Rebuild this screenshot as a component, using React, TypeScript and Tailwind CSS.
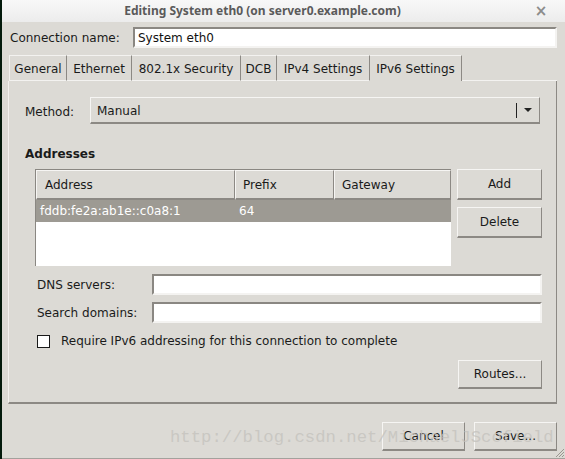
import { useState } from 'react';

const raised =
  'bg-[#dcdad5] border border-t-[#f6f5f3] border-l-[#f6f5f3] border-r-[#8c8984] border-b-2 border-b-[#8c8984]';
const sunken =
  'bg-white border-2 border-t-[#8a8782] border-l-[#8a8782] border-r-[#f4f3f1] border-b-[#f4f3f1] outline-none px-[3px] text-[12px]';

function Button({ label, className = '' }: { label: string; className?: string }) {
  return (
    <button className={`${raised} flex items-center justify-center text-[12px] text-[#1a1a1a] ${className}`}>
      {label}
    </button>
  );
}

const tabs = ['General', 'Ethernet', '802.1x Security', 'DCB', 'IPv4 Settings', 'IPv6 Settings'];
const tabWidths = ['w-[58px]', 'w-[65px]', 'w-[109px]', 'w-[36px]', 'w-[93px]', 'w-[92px]'];

export default function App() {
  const [name, setName] = useState('System eth0');
  const [requireV6, setRequireV6] = useState(false);

  return (
    <div className="flex h-[459px] w-[565px] bg-black font-['DejaVu_Sans',sans-serif] text-[12px] text-[#1a1a1a] overflow-hidden">
      <div className="w-[2px] bg-[#041a0c]" />
      <div className="relative flex-1 flex flex-col bg-[#dcdad5] border-b border-b-[#a3a19c]">
        {/* title bar */}
        <div className="flex h-[22px] bg-gradient-to-b from-[#f8f8f8] to-[#ececec]">
          <div className="flex-1 flex items-center justify-center font-['Noto_Sans',sans-serif] font-bold text-[12px] text-[#5a5a5a] pl-[2px]">
            Editing System eth0 (on server0.example.com)
          </div>
          <div className="w-[44px] flex items-center justify-center text-[#8c8c8c] font-bold text-[15px] pr-[4px]">
            ×
          </div>
        </div>

        {/* connection name */}
        <div className="flex items-center mt-[5px] h-[21px] pl-[8px] pr-[8px]">
          <div className="w-[123px]">Connection name:</div>
          <input
            value={name}
            onChange={e => setName(e.target.value)}
            className={`${sunken} flex-1 h-[21px] text-[#111]`}
          />
        </div>

        {/* tabs */}
        <div className="flex mt-[7px] ml-[7px] h-[26px]">
          {tabs.map((t, i) => (
            <div
              key={t}
              className={`${tabWidths[i]} flex items-center justify-center pt-[1px] border-t border-t-[#f3f2f0] border-r border-r-[#8c8984] ${i === 0 ? 'border-l border-l-[#f3f2f0]' : ''} ${i === 5 ? 'border-b-0' : 'border-b border-b-[#f3f2f0]'}`}
            >
              {t}
            </div>
          ))}
          <div className="flex-1 border-b border-b-[#f3f2f0] mr-[8px]" />
        </div>

        {/* panel */}
        <div className="ml-[6px] mr-[8px] h-[323px] border-l border-l-[#f3f2f0] border-r border-r-[#8c8984] border-b-2 border-b-[#8c8984] pl-[16px] pr-[14px] flex flex-col">
          <div className="flex items-center mt-[16px] h-[27px]">
            <div className="w-[65px] pt-[2px]">Method:</div>
            <div className={`${raised} flex-1 h-[27px] mr-[2px] flex items-center`}>
              <span className="flex-1 pl-[6px] pt-[2px]">Manual</span>
              <span className="w-px h-[15px] bg-[#222]" />
              <svg width="22" height="8" viewBox="0 0 22 8">
                <path d="M7 2h8l-4 4z" fill="#222" />
              </svg>
            </div>
          </div>

          <div className="mt-[22px] font-bold leading-[15px] pt-[1px]">Addresses</div>

          <div className="flex mt-[7px]">
            <div className="ml-[10px] w-[416px] h-[97px] bg-white border-l border-t border-l-[#8a8782] border-t-[#8a8782] flex flex-col">
              <div className="flex h-[30px]">
                <div className={`${raised} w-[199px] flex items-center pl-[8px]`}>Address</div>
                <div className={`${raised} w-[99px] flex items-center pl-[7px]`}>Prefix</div>
                <div className={`${raised} flex-1 flex items-center pl-[7px]`}>Gateway</div>
              </div>
              <div className="flex h-[22px] items-center bg-[#9d9a93] text-white">
                <span className="w-[203px] pl-[4px]">fddb:fe2a:ab1e::c0a8:1</span>
                <span>64</span>
              </div>
            </div>
            <div className="ml-[6px] flex-1 flex flex-col gap-[7px]">
              <Button label="Add" className="h-[31px]" />
              <Button label="Delete" className="h-[31px]" />
            </div>
          </div>

          <div className="flex items-center mt-[8px] h-[21px]">
            <div className="ml-[12px] w-[115px]">DNS servers:</div>
            <input className={`${sunken} flex-1 h-[21px]`} />
          </div>
          <div className="flex items-center mt-[7px] h-[21px]">
            <div className="ml-[12px] w-[115px]">Search domains:</div>
            <input className={`${sunken} flex-1 h-[21px]`} />
          </div>

          <label className="flex items-center mt-[11px] h-[14px] ml-[12px] gap-[11px]">
            <input
              type="checkbox"
              checked={requireV6}
              onChange={e => setRequireV6(e.target.checked)}
              className="appearance-none w-[13px] h-[13px] bg-white border border-[#1a1a1a] checked:bg-[#4a90d9]"
            />
            <span>Require IPv6 addressing for this connection to complete</span>
          </label>

          <div className="flex justify-end mt-[12px]">
            <Button label="Routes..." className="w-[84px] h-[29px]" />
          </div>
        </div>

        {/* footer */}
        <div className="flex justify-end gap-[9px] mt-[18px] mr-[8px]">
          <Button label="Cancel" className="w-[83px] h-[29px]" />
          <Button label="Save..." className="w-[83px] h-[29px]" />
        </div>

        {/* watermark */}
        <div className="absolute left-[168px] top-[425px] font-['Liberation_Mono',monospace] text-[17.3px] text-[#c4c2bd]/80 pointer-events-none">
          http://blog.csdn.net/MichaelJScofield
        </div>

        {/* resize grip */}
        <svg className="absolute right-0 bottom-0" width="12" height="12" viewBox="0 0 12 12">
          <path d="M11 3L3 11M11 6L6 11M11 9L9 11" stroke="#9a978f" strokeWidth="1" />
        </svg>
      </div>
    </div>
  );
}
